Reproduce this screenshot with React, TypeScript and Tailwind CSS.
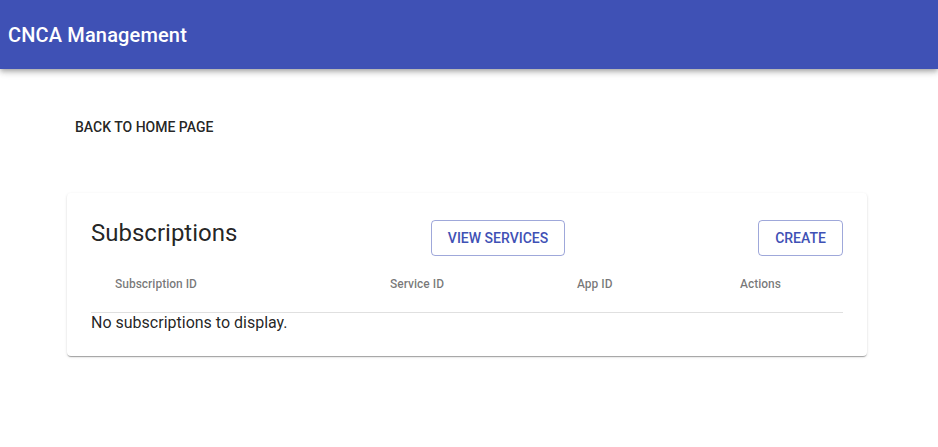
import React from "react";

const Header = () => {
  return (
    <header className="flex h-[69px] items-center bg-[#3f51b5] px-2 shadow-[0_2px_4px_-1px_rgba(0,0,0,0.2),0_4px_5px_0_rgba(0,0,0,0.14),0_1px_10px_0_rgba(0,0,0,0.12)]">
      <h1 className="text-[20px] font-medium leading-none tracking-[0.0075em] text-white">
        CNCA Management
      </h1>
    </header>
  );
};

const SubscriptionsCard = () => {
  return (
    <div className="ml-[67px] mt-[48px] w-[800px] rounded bg-white px-6 pb-[23px] pt-[27px] shadow-[0_2px_1px_-1px_rgba(0,0,0,0.2),0_1px_1px_0_rgba(0,0,0,0.14),0_1px_3px_0_rgba(0,0,0,0.12)]">
      <div className="flex items-start">
        <h2 className="mt-[-2px] w-[340px] text-[24px] leading-[30px] text-black/[0.87]">
          Subscriptions
        </h2>
        <button className="h-9 w-[134px] rounded border border-[#3f51b5]/50 text-sm font-medium uppercase text-[#3f51b5]">
          View Services
        </button>
        <div className="flex-1" />
        <button className="h-9 w-[85px] rounded border border-[#3f51b5]/50 text-sm font-medium uppercase text-[#3f51b5]">
          Create
        </button>
      </div>
      <div className="mt-[20px] grid grid-cols-[275px_187px_163px_1fr] border-b border-black/[0.12] pb-[20px] pl-6 text-[12px] font-medium leading-4 text-black/[0.54]">
        <span>Subscription ID</span>
        <span>Service ID</span>
        <span>App ID</span>
        <span>Actions</span>
      </div>
      <p className="text-base leading-[20px] text-black/[0.87]">No subscriptions to display.</p>
    </div>
  );
};

export default function App() {
  return (
    <div className="min-h-[447px] bg-white font-['Roboto',sans-serif]">
      <Header />
      <div className="pt-[40px]">
        <button className="ml-[67px] px-2 py-[6px] text-sm font-medium uppercase leading-[24px] text-black/[0.87]">
          Back to home page
        </button>
      </div>
      <SubscriptionsCard />
    </div>
  );
}
